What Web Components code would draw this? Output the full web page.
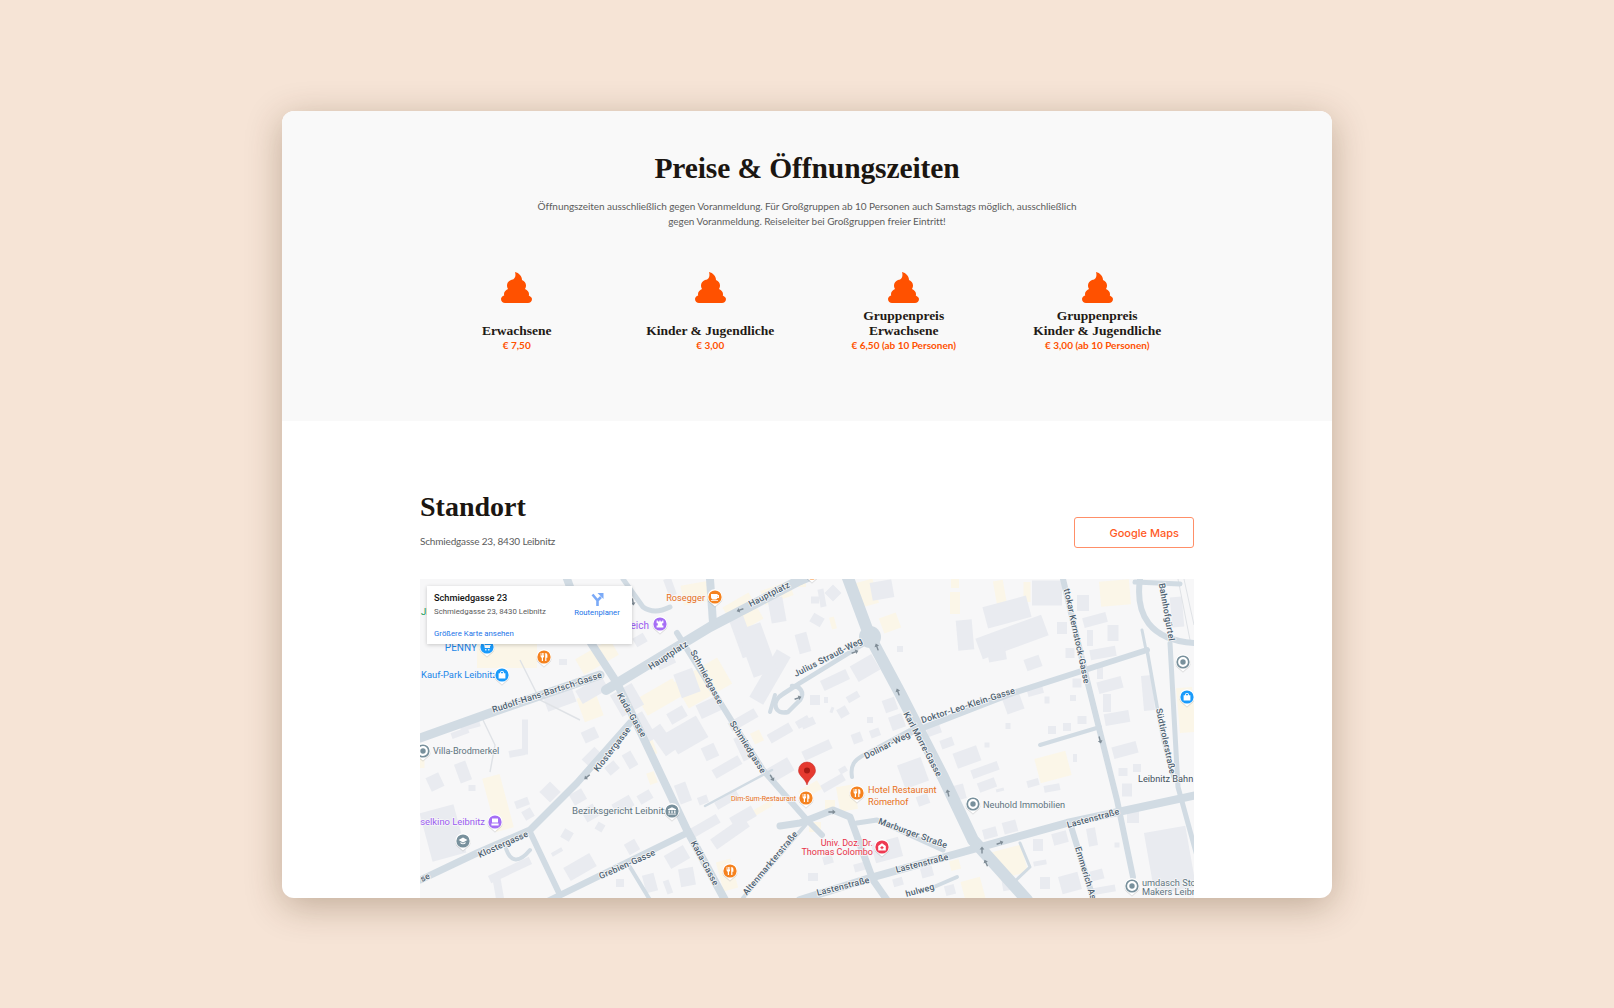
<!DOCTYPE html>
<html lang="de">
<head>
<meta charset="utf-8">
<title>Preise &amp; Öffnungszeiten</title>
<style>
  html, body { margin: 0; padding: 0; }
  body {
    background: #f6e4d6;
    height: 1008px;
    overflow: hidden;
    font-family: "Lato", "Liberation Sans", sans-serif;
  }
</style>
</head>
<body>
<app-card>
  <price-section heading="Preise &amp; Öffnungszeiten">
    <span slot="intro">Öffnungszeiten ausschließlich gegen Voranmeldung. Für Großgruppen ab 10 Personen auch Samstags möglich, ausschließlich<br>gegen Voranmeldung. Reiseleiter bei Großgruppen freier Eintritt!</span>
    <price-item price="€ 7,50">Erwachsene</price-item>
    <price-item price="€ 3,00">Kinder &amp; Jugendliche</price-item>
    <price-item price="€ 6,50 (ab 10 Personen)">Gruppenpreis<br>Erwachsene</price-item>
    <price-item price="€ 3,00 (ab 10 Personen)">Gruppenpreis<br>Kinder &amp; Jugendliche</price-item>
  </price-section>
  <location-section heading="Standort" address="Schmiedgasse 23, 8430 Leibnitz">
    <street-map>
      <map-popup></map-popup>
    </street-map>
  </location-section>
</app-card>

<script>
class AppCard extends HTMLElement {
  constructor() {
    super();
    this.attachShadow({ mode: 'open' });
    this.shadowRoot.innerHTML = `
      <style>
        :host {
          display: block;
          width: 1050px;
          height: 787px;
          margin: 111px 0 0 282px;
          background: #fff;
          border-radius: 12px;
          overflow: hidden;
          box-shadow: 0 8px 36px rgba(70, 40, 10, .3);
        }
      </style>
      <slot></slot>`;
  }
}

class PriceSection extends HTMLElement {
  constructor() {
    super();
    this.attachShadow({ mode: 'open' });
    this.shadowRoot.innerHTML = `
      <style>
        :host {
          display: block;
          height: 310px;
          box-sizing: border-box;
          padding-top: 37px;
          background: #f9f9f9;
          text-align: center;
        }
        h2 {
          margin: 0;
          font: 700 29.5px/40px "Liberation Serif", serif;
          letter-spacing: -.1px;
          color: #1b1611;
        }
        .intro {
          margin: 10.5px auto 0;
          width: 580px;
          font-size: 10px;
          line-height: 15.5px;
          letter-spacing: -.06px;
          white-space: nowrap;
          color: #5c5c5c;
        }
        .grid {
          display: grid;
          grid-template-columns: repeat(4, 193.5px);
          width: 774px;
          margin: 42.5px auto 0;
        }
      </style>
      <h2></h2>
      <div class="intro"><slot name="intro"></slot></div>
      <div class="grid"><slot></slot></div>`;
    this.shadowRoot.querySelector('h2').textContent = this.getAttribute('heading');
  }
}

class PriceItem extends HTMLElement {
  constructor() {
    super();
    this.attachShadow({ mode: 'open' });
    this.shadowRoot.innerHTML = `
      <style>
        :host { display: flex; flex-direction: column; align-items: center; }
        svg { display: block; width: 31px; height: 31px; fill: #ff5100; }
        .name {
          display: flex;
          align-items: flex-end;
          min-height: 30px;
          margin-top: 4.5px;
          font: 700 13.5px/15px "Liberation Serif", serif;
          color: #1f1a15;
        }
        .price {
          font-size: 10px;
          font-weight: 700;
          line-height: 15px;
          color: #ff5100;
        }
      </style>
      <svg viewBox="0 0 31 31"><path d="M14 0C18 1 21 4 21 8C23.5 9 25 11 25 13.5C25 15 24.5 16 24 17C26.5 18 28 20 28 22C28 22.5 28 23 27.8 23.4C30 24.5 31 26 31 27C31 29.5 29 31 27 31L4 31C2 31 0 29.5 0 27C0 25.5 1.2 24 3.2 23.4C3 23 3 22.5 3 22C3 20 4.5 18 7 17C6.5 16 6 15 6 13.5C6 11 7.5 9 10 8C13 8 15.5 5 14 0Z"/></svg>
      <div class="name"><div><slot></slot></div></div>
      <div class="price"></div>`;
    this.shadowRoot.querySelector('.price').textContent = this.getAttribute('price');
  }
}

class LocationSection extends HTMLElement {
  constructor() {
    super();
    this.attachShadow({ mode: 'open' });
    this.shadowRoot.innerHTML = `
      <style>
        :host { display: block; padding: 68px 138px 0; }
        .head { display: flex; justify-content: space-between; align-items: flex-end; margin-bottom: 30px; }
        h2 {
          margin: 0;
          font: 700 28px/36px "Liberation Serif", serif;
          color: #1b1611;
        }
        p {
          margin: 8px 0 0;
          font-size: 10px;
          letter-spacing: -.17px;
          line-height: 16px;
          color: #5c5c5c;
        }
        a {
          box-sizing: border-box;
          display: flex;
          align-items: center;
          justify-content: flex-end;
          width: 120px;
          height: 31px;
          margin-bottom: 1px;
          padding-right: 14px;
          border: 1px solid #ff8f68;
          border-radius: 3px;
          font: 500 11px "Inter", "Open Sans", sans-serif;
          color: #ff5a1f;
          text-decoration: none;
        }
      </style>
      <div class="head">
        <div><h2></h2><p></p></div>
        <a href="#">Google Maps</a>
      </div>
      <slot></slot>`;
    this.shadowRoot.querySelector('h2').textContent = this.getAttribute('heading');
    this.shadowRoot.querySelector('p').textContent = this.getAttribute('address');
  }
}

class MapPopup extends HTMLElement {
  constructor() {
    super();
    this.attachShadow({ mode: 'open' });
    this.shadowRoot.innerHTML = `
      <style>
        :host {
          position: absolute;
          left: 7px;
          top: 7px;
          width: 205px;
          height: 58px;
          box-sizing: border-box;
          padding: 6px 7px 0;
          display: flex;
          justify-content: space-between;
          background: #fff;
          box-shadow: 0 1px 4px rgba(0, 0, 0, .2);
          font-family: "Roboto", sans-serif;
        }
        b { display: block; font-size: 9.2px; line-height: 12px; font-weight: 500; color: #111; }
        span { display: block; margin-top: 3px; font-size: 7.8px; line-height: 10px; color: #5b5b5b; }
        a { display: block; margin-top: 12px; font-size: 7.8px; line-height: 10px; color: #1a73e8; text-decoration: none; }
        .route { width: 50px; margin-right: 3px; text-align: center; font-size: 7.7px; line-height: 10px; color: #1a73e8; }
        svg { display: block; width: 14px; height: 14px; margin: 0 auto 2px; }
      </style>
      <div>
        <b>Schmiedgasse 23</b>
        <span>Schmiedgasse 23, 8430 Leibnitz</span>
        <a href="#">Größere Karte ansehen</a>
      </div>
      <div class="route">
        <svg viewBox="0 0 14 14"><path d="M7.5 14V8.5L11 5M2.5 2.5L7.5 8.5" fill="none" stroke="#7baaf7" stroke-width="2.6"/><path d="M7.5 1H13.5V7Z" fill="#7baaf7"/></svg>
        Routenplaner
      </div>`;
  }
}

// everything on the map is in page coordinates, the viewBox takes care of the offset
const ROADS = [
  ['M420 738L490 713L600 675', 9],
  ['M606 690L710 627L800 580', 10],
  ['M800 580L825 570', 10],
  ['M560 560L591 643L617 683L643 737L687 830L725 900', 8],
  ['M677 633L733 723L763 770L807 820L822 835', 6],
  ['M710 579L713 623', 8],
  ['M623 579L643 607C650 612 660 612 670 607', 5],
  ['M845 570L870 637L900 693L943 777L973 840L1027 900', 12],
  ['M870 640L800 683L783 694C770 702 775 715 788 712L800 700C805 692 800 686 792 686', 4.5],
  ['M775 695L770 712', 4],
  ['M910 733L1013 693L1147 650', 6],
  ['M1063 579L1087 680L1117 800L1133 877', 6],
  ['M1147 650L1163 740L1173 777', 3.5],
  ['M1142 630L1146 650', 3],
  ['M1140 579C1135 615 1150 640 1194 643', 6],
  ['M1170 643L1178 787L1200 867', 5],
  ['M1135 582L1180 584', 5],
  ['M800 900L870 878L963 852L1067 823L1197 795', 8],
  ['M780 826L800 823L833 810L850 817L873 880L887 900', 7],
  ['M857 823L877 820L943 850', 5],
  ['M852 777C850 765 855 760 862 756L910 730', 4],
  ['M420 880L477 853L530 830L577 783L630 723', 7],
  ['M530 832L560 895', 6],
  ['M505 845C510 865 520 862 530 850', 4],
  ['M540 905L687 833', 6.5],
  ['M630 867L650 900', 4],
  ['M743 898L807 823', 4],
  ['M1070 823L1093 898', 6],
  ['M1040 745L1100 727', 4],
  ['M927 890L957 877', 4],
  ['M705 806L772 770', 2.5],
  ['M1020 843L1030 867L1013 883', 3]
];

const BUILDINGS = [
  [1007,612,45,22,-15],[1012,637,70,22,-20],[965,635,16,30,-5],[997,655,18,12,-10],[1033,663,16,12,-20],
  [1047,593,30,25,0],[1083,603,12,16,0],[1095,620,24,10,-15],[1062,628,10,12,0],[1113,633,11,16,0],
  [1090,638,6,16,0],[1103,653,26,10,-10],[1070,653,9,10,0],[1110,685,25,12,-15],[1100,673,6,12,0],
  [1107,703,8,18,0],[1117,718,25,12,-10],[1035,690,16,10,-15],[1013,703,18,18,-20],[1077,683,9,9,0],
  [1047,700,5,7,0],[1073,698,6,6,0],[1148,693,11,35,-5],[1177,612,12,30,-5],[1052,730,8,8,0],
  [1067,727,8,8,0],[1082,720,9,8,0],[882,590,22,18,-10],[900,649,6,6,0],[833,593,12,12,45],
  [815,600,8,7,0],[822,598,6,18,-10],[817,620,12,10,30],[865,668,25,18,-30],[835,680,28,11,-25],
  [815,700,10,10,0],[853,697,13,7,-30],[843,712,10,10,-30],[826,700,4,6,0],[832,710,3,6,20],
  [890,705,13,13,-20],[897,722,14,14,-20],[870,720,6,6,0],[803,722,14,8,-30],[933,728,14,14,-20],
  [947,743,13,9,-20],[967,757,25,16,-20],[985,770,28,9,-20],[987,785,18,10,-20],[960,792,10,15,-15],
  [1000,790,8,3,-15],[1033,783,12,7,-15],[1052,788,16,7,-10],[987,745,5,5,0],[1008,726,5,6,0],
  [1125,750,25,12,-15],[1123,772,9,8,0],[1137,768,8,8,0],[1127,790,10,13,0],[1075,758,4,8,0],
  [1010,827,14,12,-15],[990,833,14,10,-15],[1038,845,10,12,0],[1060,838,15,12,-15],[1092,837,9,18,-10],
  [1133,817,12,12,0],[1117,845,5,5,0],[1097,875,13,10,-15],[1045,883,10,12,0],[1070,883,20,18,-15],
  [1040,863,13,5,-10],[1170,860,42,62,-10],[1103,890,25,7,-10],[887,850,28,20,-15],[913,773,25,25,-20],
  [923,800,12,10,-20],[857,738,10,10,-20],[875,733,10,8,-20],[828,860,10,8,-15],[860,867,12,8,-15],
  [898,882,10,8,-15],[927,872,12,10,-15],[950,890,10,10,-15],[1007,883,10,15,-10],[813,877,10,8,0],
  [833,783,25,8,-30],[843,770,8,6,-30],[817,750,30,10,-25],[808,723,14,8,-25],[435,782,14,15,-25],
  [463,772,12,20,-20],[472,788,7,6,0],[522,803,14,8,-20],[528,814,10,10,-30],[550,792,15,15,45],
  [578,797,14,12,-30],[593,758,18,14,-45],[612,768,12,10,-40],[630,760,10,16,-30],[590,813,14,14,-30],
  [623,805,20,12,-30],[645,797,14,10,-30],[567,835,10,10,30],[600,827,8,8,30],[632,847,12,12,-30],
  [580,867,30,15,-30],[557,852,12,4,-30],[677,857,22,15,-30],[687,877,15,18,-10],[668,887,6,14,-20],
  [650,883,12,18,-15],[620,883,8,8,0],[510,870,45,8,-25],[498,887,8,25,-10],[443,833,35,50,-15],
  [683,793,12,20,-20],[703,800,10,8,-20],[703,827,35,10,-30],[727,800,25,8,-30],[743,817,25,12,-30],
  [730,833,40,12,-35],[663,740,14,30,-35],[687,735,35,25,-30],[710,752,14,14,-25],[727,767,30,10,-30],
  [743,748,10,25,-25],[780,770,25,15,-30],[525,737,6,35,0],[517,753,16,7,-10],[770,677,55,16,-60],
  [743,637,15,40,-20],[757,650,25,50,-20],[687,683,20,25,-20],[710,707,25,15,-25],[777,610,15,25,-10],
  [803,643,12,20,-15],[563,662,8,6,0],[592,690,30,15,-30],[627,700,25,25,-30],[643,728,15,30,-30],
  [677,715,18,12,-30],[743,720,30,10,-30],[780,733,25,10,-30],[460,733,18,6,-20],[670,587,8,18,-20],
  [470,725,20,8,-15],[665,660,18,14,-25],[640,640,12,10,-30],[590,735,15,12,-25],[560,700,30,14,-20]
];

const BEIGE = [
  [1115,593,30,25,-5],[1000,593,10,25,-10],[955,603,10,22,0],[1027,592,7,20,0],[955,583,8,10,0],
  [867,593,18,25,-15],[890,623,18,16,-20],[833,623,5,12,-15],[1053,767,32,25,-15],[847,798,18,25,-10],
  [1010,862,30,28,-15],[815,827,12,10,0],[955,865,10,10,-15],[973,890,20,22,-15],[498,803,18,55,-15],
  [650,740,5,30,-20],[652,778,8,12,-20],[727,875,15,30,-15],[763,808,20,6,-30],[422,763,5,10,0],
  [507,653,60,30,0],[597,657,40,18,-30],[590,707,20,25,-20],[703,683,50,30,-30],[660,697,40,20,-30],
  [743,613,30,30,-30],[697,593,30,20,-10],[777,593,30,15,-20],[800,583,12,8,0],[757,737,10,12,-25],
  [1186,710,16,45,-5],[810,790,22,10,-30],[830,805,10,10,0]
];

const STREETS = [
  ['Hauptplatz',769,594,-27],['Hauptplatz',668,655,-33],['Rudolf-Hans-Bartsch-Gasse',547,692,-18],
  ['Kada-Gasse',632,715,60],['Schmiedgasse',707,677,62],['Schmiedgasse',748,747,58],
  ['Julius Strauß-Weg',828,657,-27],['Karl Morre-Gasse',923,744,62],['Doktor-Leo-Klein-Gasse',968,705,-18],
  ['ttokar Kernstock-Gasse',1077,636,78],['Bahnhofgürtel',1167,612,80],['Südtirolerstraße',1166,741,78],
  ['Dolinar-Weg',887,745,-27],['Marburger Straße',913,833,20],['Lastenstraße',922,863,-14],
  ['Lastenstraße',1093,818,-15],['Lastenstraße',843,886,-14],['Emmerich As',1086,873,73],
  ['hulweg',920,890,-15],['Klostergasse',612,749,-52],['Klostergasse',503,844,-24],
  ['Kada-Gasse',705,863,62],['Grebien-Gasse',627,864,-24],['Altenmarkterstraße',770,863,-50],['se',425,877,-24]
];

// text, anchor, x, y (middle of the line), size, colour
const BLUE = '#1a86e8', ORANGE = '#e8711d', PURPLE = '#9a5cf0', GREY = '#5f7580', RED = '#e8334a';
const PLACES = [
  ['Rosegger','end',705,598,9.2,ORANGE],['JE','start',421,612,9.5,'#0f9d58'],['Österreich','end',649,625,10,PURPLE],
  ['PENNY','end',477,647,10,BLUE],['Kauf-Park Leibnitz','start',421,675,9.4,BLUE],
  ['Villa-Brodmerkel','start',433,751,9.1,GREY],['Bezirksgericht Leibnitz','start',572,811,9.6,GREY],
  ['eselkino Leibnitz','end',485,822,9.4,PURPLE],['Dim-Sum-Restaurant','end',796,799,7.1,ORANGE],
  ['Hotel Restaurant','start',868,790,9.2,ORANGE],['Römerhof','start',868,802,9.2,ORANGE],
  ['Univ. Doz. Dr.','end',873,843,9,RED],['Thomas Colombo','end',873,852,9,RED],
  ['Neuhold Immobilien','start',983,805,9.2,GREY],['Leibnitz Bahn','start',1138,779,9.2,'#44525e'],
  ['umdasch Sto','start',1142,883,9.2,GREY],['Makers Leibn','start',1142,892,9.2,GREY]
];

const ICONS = {
  fork: '<path d="M-3.4-4V-1C-3.4 0-2.8.5-2.2.7V4H-1V.7C-.4.5.1 0 .1-1V-4H-.6V-1.6H-1.2V-4H-2V-1.6H-2.6V-4ZM1.2-4V4H2.4V.8H3.4V-1.8C3.4-3.2 2.4-4 1.2-4Z"/>',
  cup: '<path d="M-4-3H2.6V-2H4V1H2.4C2 2 1.2 2.6 0 2.6H-1.4C-3 2.6-4 1.5-4 0ZM2.6-1V0H3V-1ZM-4 3.2H3V4H-4Z"/>',
  bag: '<path d="M-3.4-1.8H-2C-2-3.4-1.2-4 0-4S2-3.4 2-1.8H3.4V3.6H-3.4ZM-1.1-1.8H1.1C1.1-2.8.7-3.2 0-3.2S-1.1-2.8-1.1-1.8Z"/>',
  cart: '<path d="M-4-3.6H-2.6L-2.2-2H4L3-.6V1H-2.2L-3-2.8H-4ZM-1.8 2H-.6V3.4H-1.8ZM1.2 2H2.4V3.4H1.2Z"/>',
  chess: '<path d="M-3.4-3.6H-2.2V-2.6H-.6V-3.6H.6V-2.6H2.2V-3.6H3.4V-.8H2.2V1.6H3.4V3.6H-3.4V1.6H-2.2V-.8H-3.4Z"/>',
  school: '<path d="M0-3.4L4.4-1L0 1.4L-4.4-1ZM-2.6 1V2.2C-1.4 3.6 1.4 3.6 2.6 2.2V1L0 2.4Z"/>',
  court: '<path d="M0-3.8L4-1.8V-1H-4V-1.8ZM-3.4-.4H-2.2V2.2H-3.4ZM-.6-.4H.6V2.2H-.6ZM2.2-.4H3.4V2.2H2.2ZM-4 2.8H4V3.6H-4Z"/>',
  film: '<path d="M-3-3.6H3V.6H-3ZM-3.6 1.4H3.6V3.4H-3.6ZM-1.6-2.2H1.6V-1H-1.6Z"/>',
  doctor: '<path d="M0-3.8L3.8-1V3.4H-3.8V-1ZM-.6-1V0H-1.6V1.2H-.6V2.2H.6V1.2H1.6V0H.6V-1Z"/>'
};
const PINS = [
  [487,647,'#1a9bfb','cart'],[544,657,'#f5821f','fork'],[502,675,'#1a9bfb','bag'],[715,597,'#f5821f','cup'],
  [660,624,'#a56ef5','chess'],[812,573,'#f5821f','fork'],[1183,662,'#78909c','dot'],[1187,697,'#1a9bfb','bag'],
  [423,751,'#78909c','dot'],[495,822,'#a56ef5','film'],[463,841,'#78909c','school'],[672,811,'#78909c','court'],
  [730,871,'#f5821f','fork'],[806,798,'#f5821f','fork'],[857,793,'#f5821f','fork'],[882,847,'#ee3a52','doctor'],
  [973,804,'#78909c','dot'],[1132,886,'#78909c','dot']
];

// x, y, direction of travel in degrees (0 = up)
const ARROWS = [
  [832,812,90],[948,793,-15],[982,850,0],[986,863,-25],[1000,843,70],[1100,740,165],[855,652,70],
  [877,647,-20],[898,692,-20],[587,777,-130],[772,778,150],[740,610,-110],[798,698,70],[633,602,170]
];

class StreetMap extends HTMLElement {
  constructor() {
    super();
    this.attachShadow({ mode: 'open' });

    const rect = (b) => `<rect x="${b[0] - b[2] / 2}" y="${b[1] - b[3] / 2}" width="${b[2]}" height="${b[3]}" transform="rotate(${b[4]} ${b[0]} ${b[1]})"/>`;
    const roads = ROADS.map(r => `<path d="${r[0]}" stroke-width="${r[1]}"/>`).join('');
    const streets = STREETS.map(s =>
      `<text text-anchor="middle" transform="translate(${s[1]} ${s[2]}) rotate(${s[3]})" dy="3.2">${s[0]}</text>`).join('');
    const places = PLACES.map(p =>
      `<text text-anchor="${p[1]}" x="${p[2]}" y="${p[3]}" dy=".35em" font-size="${p[4]}" fill="${p[5]}">${p[0]}</text>`).join('');
    const arrows = ARROWS.map(a =>
      `<path transform="translate(${a[0]} ${a[1]}) rotate(${a[2]})" d="M0-3.6L2.4-.6H.7V3.6H-.7V-.6H-2.4Z"/>`).join('');
    const pins = PINS.map(p => {
      const glyph = ICONS[p[3]] || `<circle r="3.8" fill="none" stroke="#fff" stroke-width="2.2"/>`;
      return `<g transform="translate(${p[0]} ${p[1]})">
        <path d="M-7.6 1.5A7.8 7.8 0 1 1 7.6 1.5C6.8 4.2 3.4 6.4 0 9.6C-3.4 6.4-6.8 4.2-7.6 1.5Z" fill="#fff" filter="url(#soft)"/>
        <circle r="6.6" fill="${p[2]}"/>
        <g fill="#fff">${glyph}</g>
      </g>`;
    }).join('');

    this.shadowRoot.innerHTML = `
      <style>
        :host { display: block; position: relative; width: 774px; height: 319px; overflow: hidden; background: #f7f7f8; }
        svg { display: block; }
        .beige { fill: #fbf6e8; }
        .buildings { fill: #e9ebf0; }
        .roads { fill: none; stroke: #d1dbe3; stroke-linecap: round; stroke-linejoin: round; }
        .streets { font: 500 8.8px "Roboto", sans-serif; fill: #4c5f70; paint-order: stroke; stroke: #f7f7f8; stroke-width: 1.6px; letter-spacing: .2px; }
        .places { font-family: "Roboto", sans-serif; paint-order: stroke; stroke: #f7f7f8; stroke-width: 1.4px; }
        .arrows { fill: #7f8c96; }
      </style>
      <svg width="774" height="319" viewBox="420 579 774 319">
        <defs><filter id="soft" x="-30%" y="-30%" width="160%" height="170%"><feDropShadow dx="0" dy=".6" stdDeviation=".7" flood-color="#000" flood-opacity=".3"/></filter></defs>
        <g class="beige">${BEIGE.map(rect).join('')}</g>
        <g class="buildings">${BUILDINGS.map(rect).join('')}</g>
        <circle cx="870" cy="637" r="11" fill="#d1dbe3"/>
        <path d="M1178 579L1190 640M1184 579L1194 625" stroke="#dfe2e6" stroke-width="1" fill="none"/>
        <path d="M483 720L495 745L490 772M520 660L540 700L580 720" stroke="#dfe2e6" stroke-width="1.4" fill="none"/>
        <g class="roads">${roads}</g>
        <g class="arrows">${arrows}</g>
        <g class="streets">${streets}</g>
        <g class="places">${places}</g>
        ${pins}
        <path d="M807 785C805 778 798.5 776 798.5 770.5A8.5 8.5 0 0 1 815.5 770.5C815.5 776 809 778 807 785Z" fill="#e53a30" stroke="#c5221f" stroke-width=".5"/>
        <circle cx="807" cy="770.5" r="3" fill="#a61b14"/>
      </svg>
      <slot></slot>`;
  }
}

customElements.define('app-card', AppCard);
customElements.define('price-section', PriceSection);
customElements.define('price-item', PriceItem);
customElements.define('location-section', LocationSection);
customElements.define('map-popup', MapPopup);
customElements.define('street-map', StreetMap);
</script>
</body>
</html>
